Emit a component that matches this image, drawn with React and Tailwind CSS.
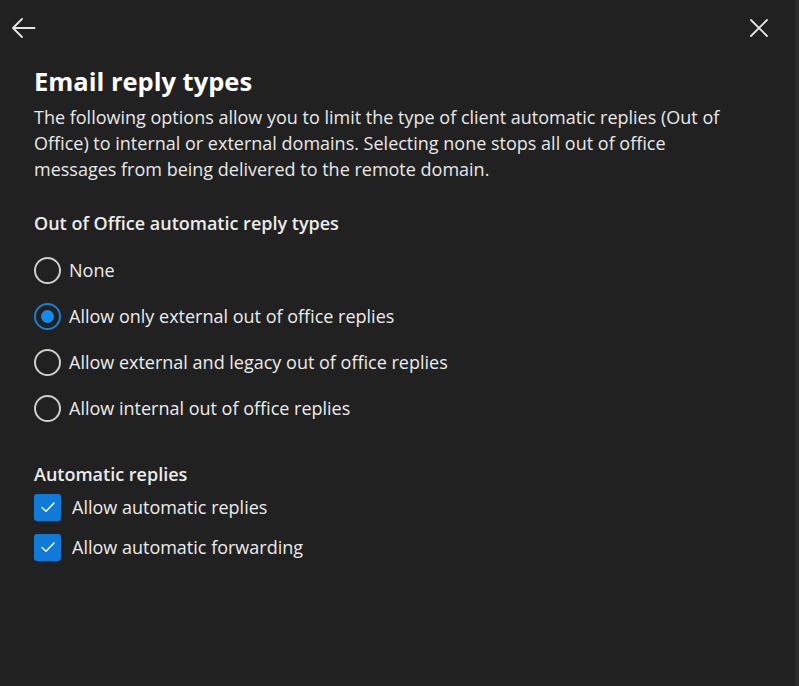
import { useState } from 'react';

const replyTypes = [
  'None',
  'Allow only external out of office replies',
  'Allow external and legacy out of office replies',
  'Allow internal out of office replies',
];

const Radio = ({ checked, label, onClick }) => (
  <button onClick={onClick} className="flex items-center h-[46px] text-left">
    <span
      className={`w-[27px] h-[27px] rounded-full border-2 flex items-center justify-center shrink-0 ${
        checked ? 'border-[#1a7fd6]' : 'border-[#cfcfcf]'
      }`}
    >
      {checked && <span className="w-[13px] h-[13px] rounded-full bg-[#1589ee]" />}
    </span>
    <span className="ml-[8px] text-[18px] text-[#ececec]">{label}</span>
  </button>
);

const Check = ({ checked, label, onClick }) => (
  <button onClick={onClick} className="flex items-center h-[40px] text-left">
    <span
      className={`w-[27px] h-[27px] rounded-[3px] flex items-center justify-center shrink-0 ${
        checked ? 'bg-[#0f7ad8]' : 'border-2 border-[#cfcfcf]'
      }`}
    >
      {checked && (
        <svg width="18" height="18" viewBox="0 0 18 18" fill="none">
          <path d="M3 9.5l4 3.8L15 5" stroke="white" strokeWidth="1.5" strokeLinecap="round" strokeLinejoin="round" />
        </svg>
      )}
    </span>
    <span className="ml-[11px] text-[18px] text-[#ececec]">{label}</span>
  </button>
);

export default function App() {
  const [selected, setSelected] = useState(1);
  const [autoReplies, setAutoReplies] = useState(true);
  const [autoForward, setAutoForward] = useState(true);

  return (
    <div className="w-[799px] h-[686px] bg-[#212121] border-r-[4px] border-[#2a2a2a] overflow-hidden font-['Open_Sans',sans-serif] text-[#ececec]">
      <div className="flex justify-between items-center pl-[11px] pr-[26px] pt-[17px]">
        <button className="text-[#e6e6e6]">
          <svg width="25" height="22" viewBox="0 0 25 22" fill="none">
            <path d="M23.5 11H2M11 2l-9 9 9 9" stroke="currentColor" strokeWidth="1.8" strokeLinecap="round" strokeLinejoin="round" />
          </svg>
        </button>
        <button className="text-[#e6e6e6]">
          <svg width="20" height="20" viewBox="0 0 20 20" fill="none">
            <path d="M2 2l16 16M18 2L2 18" stroke="currentColor" strokeWidth="1.8" strokeLinecap="round" />
          </svg>
        </button>
      </div>

      <div className="px-[34px] pt-[26px]">
        <h1 className="text-[25.5px] font-bold text-white leading-[32px]">Email reply types</h1>
        <p className="mt-[7px] max-w-[702px] text-[18px] leading-[26px] text-[#e8e8e8]">
          The following options allow you to limit the type of client automatic replies (Out of Office) to internal or
          external domains. Selecting none stops all out of office messages from being delivered to the remote domain.
        </p>

        <h2 className="mt-[29px] text-[18px] font-semibold leading-[24px]">Out of Office automatic reply types</h2>
        <div className="mt-[12px] flex flex-col">
          {replyTypes.map((t, i) => (
            <Radio key={t} label={t} checked={selected === i} onClick={() => setSelected(i)} />
          ))}
        </div>

        <h2 className="mt-[31px] text-[18px] font-semibold leading-[24px]">Automatic replies</h2>
        <div className="mt-[1px] flex flex-col">
          <Check label="Allow automatic replies" checked={autoReplies} onClick={() => setAutoReplies(!autoReplies)} />
          <Check label="Allow automatic forwarding" checked={autoForward} onClick={() => setAutoForward(!autoForward)} />
        </div>
      </div>
    </div>
  );
}
